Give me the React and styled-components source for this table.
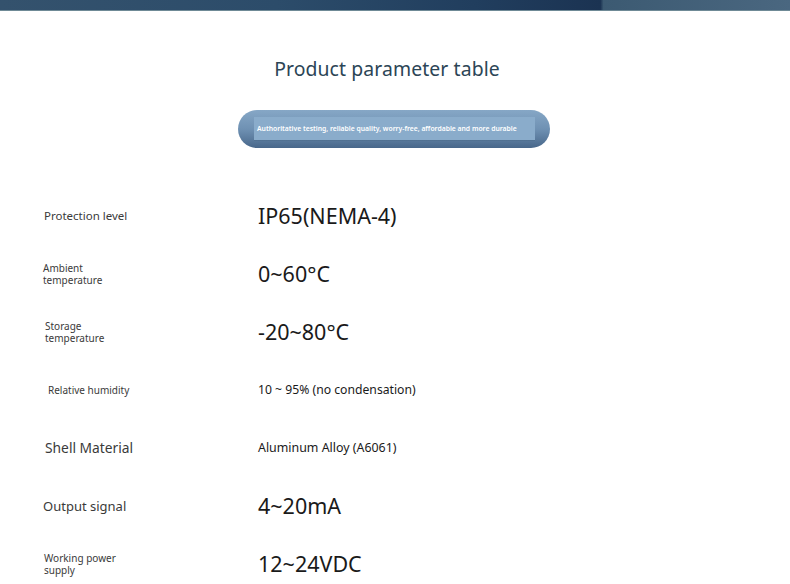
import React from 'react';
import styled, { createGlobalStyle } from 'styled-components';

const GlobalStyle = createGlobalStyle`
  body {
    margin: 0;
    background: #fff;
    font-family: "Noto Sans", "Open Sans", sans-serif;
  }
`;

const params = [
  { label: 'Protection level', value: 'IP65(NEMA-4)', lsize: 11.5, vsize: 21.5, indent: 44 },
  { label: 'Ambient\ntemperature', value: '0~60°C', lsize: 10, vsize: 21.5, indent: 43 },
  { label: 'Storage\ntemperature', value: '-20~80°C', lsize: 10, vsize: 21.5, indent: 45 },
  { label: 'Relative humidity', value: '10 ~ 95% (no condensation)', lsize: 10, vsize: 12.2, indent: 48 },
  { label: 'Shell Material', value: 'Aluminum Alloy (A6061)', lsize: 13.8, vsize: 12.4, indent: 45 },
  { label: 'Output signal', value: '4~20mA', lsize: 13, vsize: 21.5, indent: 43 },
  { label: 'Working power\nsupply', value: '12~24VDC', lsize: 10, vsize: 21.5, indent: 44 },
];

function App() {
  return (
    <>
      <GlobalStyle />
      <Page>
        <TopBand />
        <Title>Product parameter table</Title>
        <PillRow>
          <Pill>
            <PillInner>
              Authoritative testing, reliable quality, worry-free, affordable and more durable
            </PillInner>
          </Pill>
        </PillRow>
        <Table>
          {params.map((p) => (
            <Row key={p.value}>
              <Label $size={p.lsize} $indent={p.indent}>
                {p.label}
              </Label>
              <Value $size={p.vsize}>{p.value}</Value>
            </Row>
          ))}
        </Table>
      </Page>
    </>
  );
}

const Page = styled.div`
  width: 790px;
  height: 584px;
  overflow: hidden;
  display: flex;
  flex-direction: column;
`;

const TopBand = styled.div`
  height: 10px;
  flex-shrink: 0;
  background: linear-gradient(
    90deg,
    #34526d 0%,
    #2c4c6a 35%,
    #213e5e 60%,
    #1b3352 76%,
    #3c5a72 76.4%,
    #4a6780 100%
  );
  border-bottom: 1px solid #6f8a96;
`;

const Title = styled.h1`
  margin: 44px 0 0;
  padding-right: 16px;
  text-align: center;
  font-size: 19.4px;
  font-weight: 400;
  color: #2c4556;
  letter-spacing: 0.1px;
  line-height: 28px;
`;

const PillRow = styled.div`
  display: flex;
  justify-content: center;
  margin-top: 27px;
  padding-right: 2px;
`;

const Pill = styled.div`
  width: 312px;
  height: 38px;
  border-radius: 19px;
  background: linear-gradient(180deg, #86a7c6 0%, #6f91b3 50%, #48678a 100%);
  display: flex;
  align-items: flex-start;
  padding: 7px 15px 0 16px;
  box-sizing: border-box;
`;

const PillInner = styled.div`
  flex: 1;
  height: 23px;
  background: #8aaccb;
  color: #fff;
  font-size: 6.8px;
  font-weight: 600;
  line-height: 23px;
  padding-left: 3px;
  white-space: nowrap;
  overflow: hidden;
  box-shadow: 0 1px 0 rgba(60, 90, 120, 0.25);
`;

const Table = styled.div`
  margin-top: 39px;
  display: flex;
  flex-direction: column;
`;

const Row = styled.div`
  display: grid;
  grid-template-columns: 258px 1fr;
  align-items: center;
  height: 58px;
`;

const Label = styled.div`
  padding-left: ${(p) => p.$indent}px;
  white-space: pre-line;
  font-size: ${(p) => p.$size}px;
  line-height: ${(p) => (p.$size <= 10 ? 12 : 16)}px;
  color: #3a3a3a;
`;

const Value = styled.div`
  font-size: ${(p) => p.$size}px;
  font-weight: 400;
  color: #1a1a1a;
  line-height: 28px;
  white-space: nowrap;
`;

export default App;
